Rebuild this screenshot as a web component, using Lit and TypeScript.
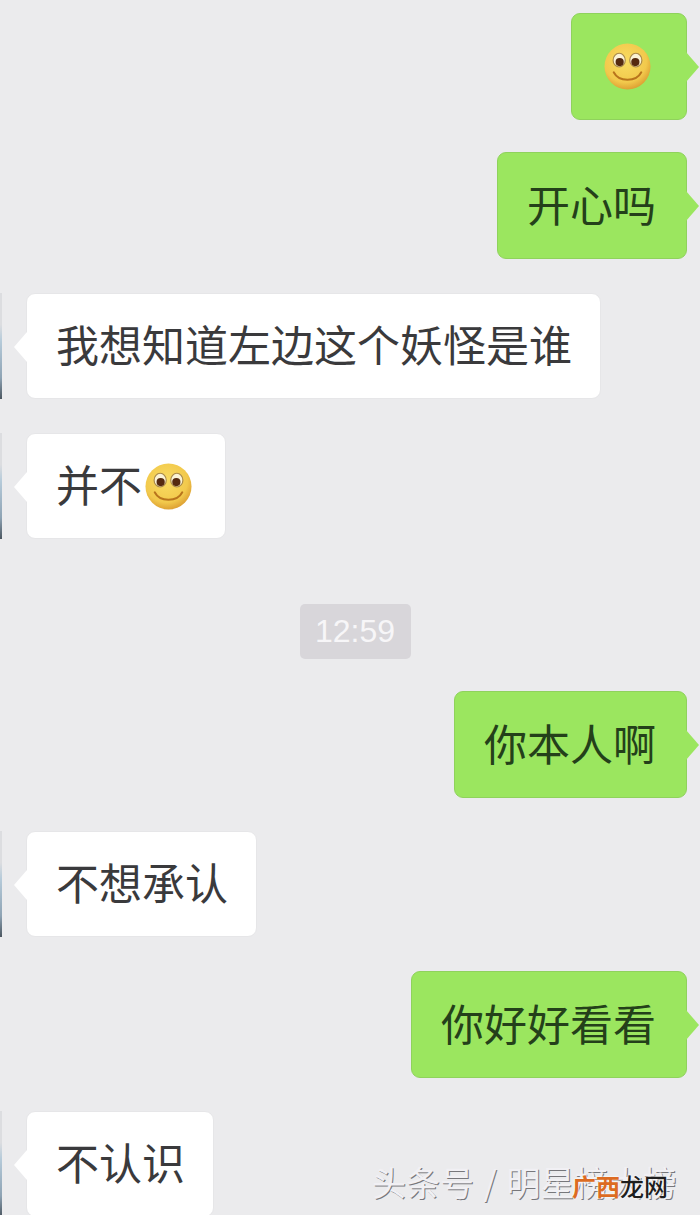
import {LitElement, html, css} from 'lit';
import {customElement} from 'lit/decorators.js';

const smile = html`<svg class="smile" viewBox="0 0 48 48">
  <defs>
    <radialGradient id="face" cx="45%" cy="38%" r="66%">
      <stop offset="0" stop-color="#f9dc62" />
      <stop offset="0.7" stop-color="#f2c94c" />
      <stop offset="1" stop-color="#d9982e" />
    </radialGradient>
  </defs>
  <circle cx="24" cy="24" r="23.5" fill="url(#face)" />
  <ellipse cx="15.5" cy="17.5" rx="6.2" ry="7" fill="#fbf3d6" stroke="#a98a4a" stroke-width="1.2" />
  <ellipse cx="32.5" cy="17.5" rx="6.2" ry="7" fill="#fbf3d6" stroke="#a98a4a" stroke-width="1.2" />
  <circle cx="16" cy="19.5" r="4.2" fill="#552a10" />
  <circle cx="32" cy="19.5" r="4.2" fill="#552a10" />
  <path d="M10 30 C15 40 33 40 38 30" fill="none" stroke="#b8741c" stroke-width="2.2" stroke-linecap="round" />
</svg>`;

type Row =
  | {side: 'me' | 'them'; text?: string; emoji?: boolean; top: number; w: number}
  | {side: 'time'; text: string; top: number; w: number};

const rows: Row[] = [
  {side: 'me', emoji: true, top: 13, w: 116},
  {side: 'me', text: '开心吗', top: 32, w: 190},
  {side: 'them', text: '我想知道左边这个妖怪是谁', top: 34, w: 575},
  {side: 'them', text: '并不', emoji: true, top: 34, w: 200},
  {side: 'time', text: '12:59', top: 65, w: 111},
  {side: 'me', text: '你本人啊', top: 32, w: 233},
  {side: 'them', text: '不想承认', top: 33, w: 231},
  {side: 'me', text: '你好好看看', top: 34, w: 276},
  {side: 'them', text: '不认识', top: 33, w: 188},
];

@customElement('app-root')
export class AppRoot extends LitElement {
  static styles = css`
    :host {
      display: block;
      width: 700px;
      height: 1215px;
      overflow: hidden;
      position: relative;
      background: #ebebed;
      font-family: 'Noto Sans CJK SC', 'Liberation Sans', sans-serif;
    }
    .row {
      display: flex;
    }
    .row.me {
      justify-content: flex-end;
      padding-right: 13px;
    }
    .row.them {
      padding-left: 26px;
    }
    .row.time {
      justify-content: center;
      padding-left: 10px;
    }
    .bubble {
      position: relative;
      box-sizing: border-box;
      padding-left: 29px;
      padding-bottom: 5px;
      display: flex;
      align-items: center;
      border-radius: 9px;
      font-size: 43px;
      line-height: 1;
      white-space: nowrap;
    }
    .me .bubble {
      height: 107px;
      background: #9be65f;
      border: 1px solid #8fd25c;
      color: #24401a;
    }
    .them .bubble {
      height: 106px;
      background: #fff;
      border: 1px solid #e6e6e8;
      color: #3a3a3c;
    }
    .tail {
      position: absolute;
      top: 38px;
      width: 13px;
      height: 30px;
    }
    .me .tail {
      right: -13px;
      background: #9be65f;
      clip-path: polygon(0 0, 100% 50%, 0 100%);
    }
    .them .tail {
      left: -13px;
      background: #fff;
      clip-path: polygon(100% 0, 0 50%, 100% 100%);
    }
    .stamp {
      height: 55px;
      display: flex;
      align-items: center;
      justify-content: center;
      border-radius: 5px;
      background: #d8d6da;
      color: #f7f6f8;
      font-family: 'Liberation Sans', sans-serif;
      font-size: 32px;
    }
    .smile {
      width: 47px;
      height: 47px;
      flex: none;
      margin-left: 3px;
      margin-top: 5px;
    }
    .avatar {
      position: absolute;
      left: 0;
      width: 2px;
      height: 106px;
      background: linear-gradient(#dcdde0, #dcdde0 30%, #b6cbda 45%, #8ea3b4 80%, #4b5660);
    }
    .mark {
      position: absolute;
      left: 372px;
      top: 1162px;
      font-size: 34px;
      line-height: 40px;
      word-spacing: 2px;
      white-space: nowrap;
      color: #f1f0f4;
      text-shadow: 1px 1px 0 #77777b;
    }
    .stamp-logo {
      position: absolute;
      left: 572px;
      top: 1170px;
      font-size: 24px;
      font-weight: 500;
      line-height: 32px;
      white-space: nowrap;
      color: #1e1e1e;
      text-shadow: 0 0 2px #fff, 0 0 2px #fff;
    }
    .stamp-logo b {
      font-weight: 700;
      color: #dc6b22;
    }
  `;

  render() {
    return html`
      ${rows.map((r) => {
        if (r.side === 'time') {
          return html`<div class="row time" style="margin-top:${r.top}px">
            <div class="stamp" style="width:${r.w}px">${r.text}</div>
          </div>`;
        }
        return html`<div class="row ${r.side}" style="margin-top:${r.top}px">
          <div class="bubble" style="width:${r.w}px">
            <span class="tail"></span>
            ${r.text}${r.emoji ? smile : ''}
          </div>
        </div>`;
      })}
      <div class="avatar" style="top:293px"></div>
      <div class="avatar" style="top:433px"></div>
      <div class="avatar" style="top:831px"></div>
      <div class="avatar" style="top:1111px"></div>
      <div class="mark">头条号 / 明星榜大榜</div>
      <div class="stamp-logo"><b>广西</b>龙网</div>
    `;
  }
}
